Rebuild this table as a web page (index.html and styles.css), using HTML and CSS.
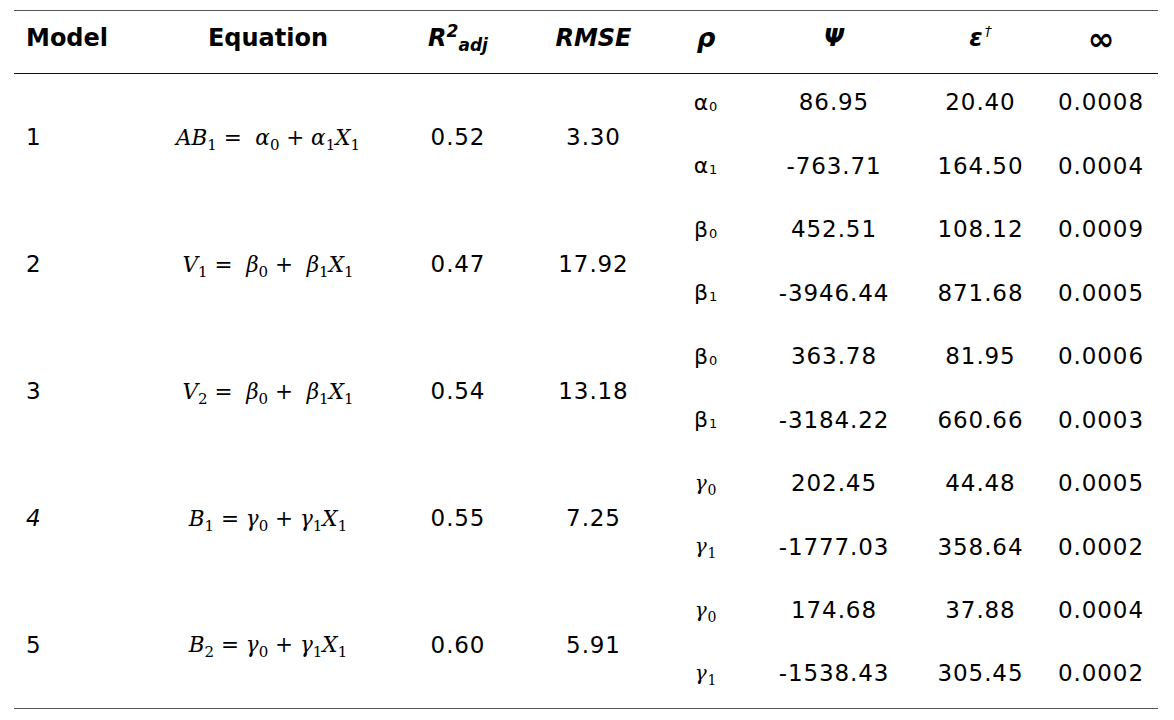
FILE: index.html
```html
<!DOCTYPE html>
<html>
<head>
<meta charset="utf-8">
<link rel="stylesheet" href="styles.css">
</head>
<body>
<table class="tbl">
  <colgroup>
    <col class="c-model"><col class="c-eq"><col class="c-r2"><col class="c-rmse"><col class="c-rho"><col class="c-psi"><col class="c-eps"><col class="c-inf">
  </colgroup>
  <thead>
    <tr>
      <th class="left">Model</th>
      <th>Equation</th>
      <th><i>R<sup>2</sup><sub>adj</sub></i></th>
      <th><i>RMSE</i></th>
      <th><i class="rho">ρ</i></th>
      <th><i>Ψ</i></th>
      <th><i>ε<sup class="dag">†</sup></i></th>
      <th class="inf">∞</th>
    </tr>
  </thead>
  <tbody>
    <tr>
      <td rowspan="2" class="left">1</td>
      <td rowspan="2" class="eq"><i>AB</i><sub>1</sub> =&nbsp; <i>α</i><sub>0</sub> + <i>α</i><sub>1</sub><i>X</i><sub>1</sub></td>
      <td rowspan="2">0.52</td>
      <td rowspan="2">3.30</td>
      <td class="par">α<sub>0</sub></td><td class="v">86.95</td><td class="v">20.40</td><td class="v">0.0008</td>
    </tr>
    <tr><td class="par">α<sub>1</sub></td><td class="v">-763.71</td><td class="v">164.50</td><td class="v">0.0004</td></tr>
    <tr>
      <td rowspan="2" class="left">2</td>
      <td rowspan="2" class="eq"><i>V</i><sub>1</sub> =&nbsp; <i>β</i><sub>0</sub> +&nbsp; <i>β</i><sub>1</sub><i>X</i><sub>1</sub></td>
      <td rowspan="2">0.47</td>
      <td rowspan="2">17.92</td>
      <td class="par">β<sub>0</sub></td><td class="v">452.51</td><td class="v">108.12</td><td class="v">0.0009</td>
    </tr>
    <tr><td class="par">β<sub>1</sub></td><td class="v">-3946.44</td><td class="v">871.68</td><td class="v">0.0005</td></tr>
    <tr>
      <td rowspan="2" class="left">3</td>
      <td rowspan="2" class="eq"><i>V</i><sub>2</sub> =&nbsp; <i>β</i><sub>0</sub> +&nbsp; <i>β</i><sub>1</sub><i>X</i><sub>1</sub></td>
      <td rowspan="2">0.54</td>
      <td rowspan="2">13.18</td>
      <td class="par">β<sub>0</sub></td><td class="v">363.78</td><td class="v">81.95</td><td class="v">0.0006</td>
    </tr>
    <tr><td class="par">β<sub>1</sub></td><td class="v">-3184.22</td><td class="v">660.66</td><td class="v">0.0003</td></tr>
    <tr>
      <td rowspan="2" class="left"><i>4</i></td>
      <td rowspan="2" class="eq"><i>B</i><sub>1</sub> = <i>γ</i><sub>0</sub> + <i>γ</i><sub>1</sub><i>X</i><sub>1</sub></td>
      <td rowspan="2">0.55</td>
      <td rowspan="2">7.25</td>
      <td class="par math"><i>γ</i><sub>0</sub></td><td class="v">202.45</td><td class="v">44.48</td><td class="v">0.0005</td>
    </tr>
    <tr><td class="par math"><i>γ</i><sub>1</sub></td><td class="v">-1777.03</td><td class="v">358.64</td><td class="v">0.0002</td></tr>
    <tr>
      <td rowspan="2" class="left">5</td>
      <td rowspan="2" class="eq"><i>B</i><sub>2</sub> = <i>γ</i><sub>0</sub> + <i>γ</i><sub>1</sub><i>X</i><sub>1</sub></td>
      <td rowspan="2">0.60</td>
      <td rowspan="2">5.91</td>
      <td class="par math"><i>γ</i><sub>0</sub></td><td class="v">174.68</td><td class="v">37.88</td><td class="v">0.0004</td>
    </tr>
    <tr class="last"><td class="par math"><i>γ</i><sub>1</sub></td><td class="v">-1538.43</td><td class="v">305.45</td><td class="v">0.0002</td></tr>
  </tbody>
</table>
</body>
</html>
```

FILE: styles.css
```css
html, body {
  margin: 0;
  padding: 0;
  background: #ffffff;
}

body {
  padding: 10px 0 0 14px;
  font-family: "DejaVu Sans", Verdana, sans-serif;
  color: #000;
}

.tbl {
  border-collapse: collapse;
  table-layout: fixed;
  width: 1144px;
  border-top: 1px solid #555;
  border-bottom: 1px solid #555;
  line-height: 1.15;
}

.c-model { width: 132px; }
.c-eq { width: 244px; }
.c-r2 { width: 136px; }
.c-rmse { width: 135px; }
.c-rho { width: 90px; }
.c-psi { width: 166px; }
.c-eps { width: 127px; }
.c-inf { width: 114px; }

.tbl thead tr {
  height: 63px;
}

.tbl tbody tr {
  height: 63.5px;
}

.tbl th {
  padding: 0 0 6px;
  font-size: 24px;
  font-weight: bold;
  text-align: center;
  border-bottom: 1px solid #111;
  vertical-align: middle;
}

.tbl th i {
  font-style: italic;
}

.tbl th .rho {
  font-size: 26px;
}

.tbl th.inf {
  font-size: 32px;
  line-height: 1;
}

.tbl th sup {
  font-size: 17px;
  vertical-align: 9px;
  line-height: 0;
}

.tbl th sub {
  font-size: 17px;
  vertical-align: -5px;
  line-height: 0;
}

.tbl th sup.dag {
  font-size: 14px;
  font-weight: normal;
  vertical-align: 10px;
  margin-left: 2px;
}

.tbl .left {
  text-align: left;
  padding-left: 12px;
}

.tbl td {
  padding: 0;
  font-size: 23px;
  letter-spacing: 0.9px;
  text-align: center;
  vertical-align: middle;
}

.tbl td.v,
.tbl td.par {
  padding-bottom: 6px;
}

.tbl td.eq {
  font-family: "DejaVu Serif", "Liberation Serif", serif;
  font-size: 21.5px;
  letter-spacing: 0;
  padding-top: 2px;
}

.tbl td.eq sub {
  font-size: 15px;
  vertical-align: -5px;
  line-height: 0;
  font-style: normal;
}

.tbl td.par {
  font-size: 22px;
}

.tbl td.par sub {
  font-size: 13px;
  vertical-align: -1px;
  line-height: 0;
}

.tbl td.par.math {
  font-family: "DejaVu Serif", serif;
  font-size: 20px;
}

.tbl td.par.math sub {
  font-size: 14px;
  vertical-align: -5px;
}
```
